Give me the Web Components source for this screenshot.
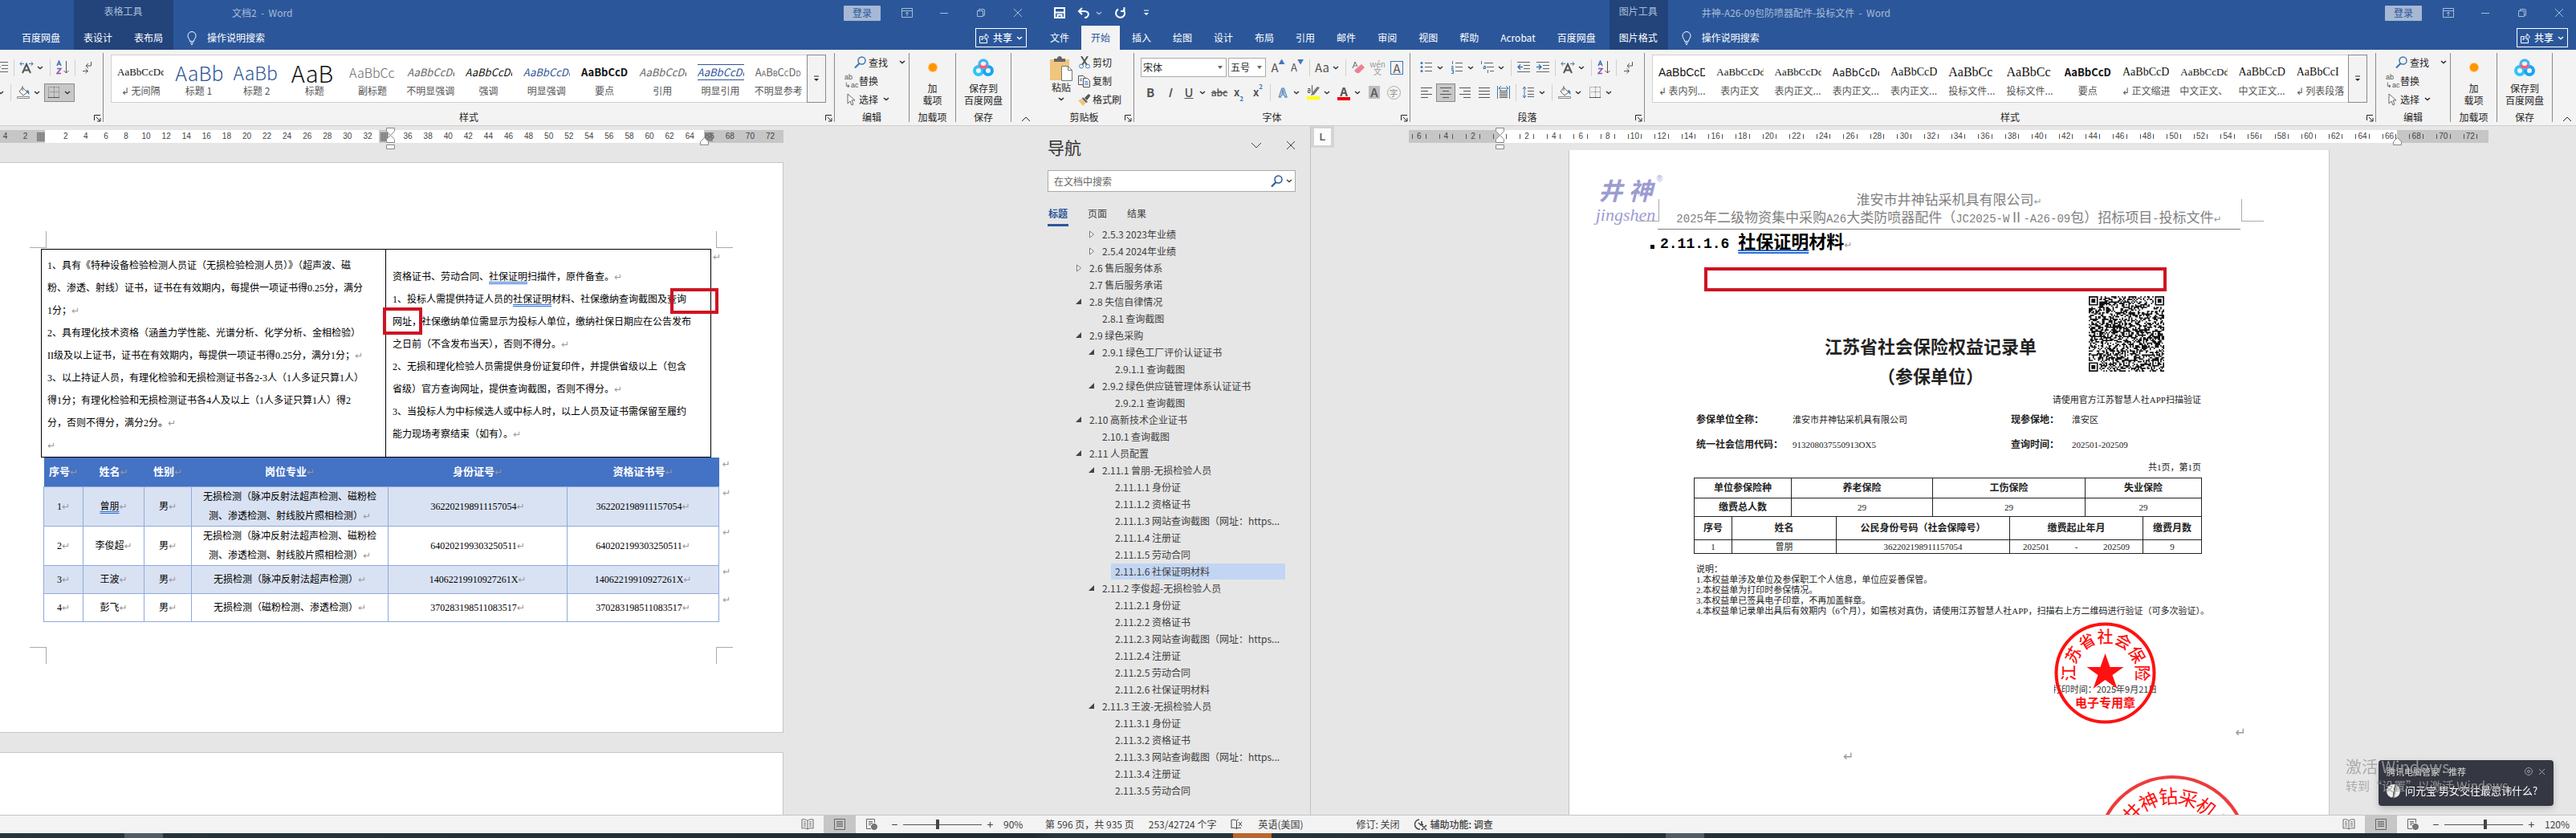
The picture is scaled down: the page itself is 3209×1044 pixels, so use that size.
<!DOCTYPE html>
<html lang="zh-CN">
<head>
<meta charset="utf-8">
<title>Word</title>
<style>
    html, body {
        margin: 0;
        height: 100%;
        overflow: hidden;
    }

    body {
        display: grid;
        grid-template-rows: minmax(0, 1fr) 6px;
        background: #e6e6e6;
        color: #262626;
        font: 12px/16px "Noto Sans CJK SC", sans-serif;
    }

    .screens {
        display: grid;
        grid-template-columns: 1289fr 1920fr;
        grid-template-rows: minmax(0, 1fr);
        min-height: 0;
    }

    word-window {
        min-width: 0;
        min-height: 0;
    }
</style>
</head>
<body>
<div class="screens">
    <word-window>
        <word-header slot="header" kind="table" style="--title-indent: 73px"></word-header>
        <word-ribbon slot="ribbon" kind="table"></word-ribbon>
        <table-document></table-document>
        <status-bar slot="status" zoom="90" thumb="44"></status-bar>
    </word-window>
    <word-window>
        <word-header slot="header" kind="picture" style="--title-indent: 42px"></word-header>
        <word-ribbon slot="ribbon" kind="picture"></word-ribbon>
        <nav-pane></nav-pane>
        <scan-document></scan-document>
        <status-bar slot="status" zoom="120" thumb="52" details></status-bar>
    </word-window>
</div>
<task-bar></task-bar>
<corner-notice></corner-notice>

<script>
const svg = (w, h, body, box) => `<svg width="${w}" height="${h}" viewBox="${box || `0 0 ${w} ${h}`}" fill="none" stroke="currentColor" aria-hidden="true">${body}</svg>`;
const lines = (list) => list.map(([x1, x2, y]) => `<path d="M${x1} ${y}.5H${x2}"/>`).join('');

const ICONS = {
    chev: svg(8, 5, '<path d="M1 1l3 2.5L7 1" stroke-width="1.4"/>'),
    save: svg(14, 14, '<path d="M1 1h12v12H1z" stroke-width="2"/><path d="M2 6.500h10M4.500 13V9.500h5V13" stroke-width="2"/>'),
    undo: svg(16, 14, '<path d="M6 1L2 5l4 4M2 5h7c7 0 6 8 0 8" stroke-width="2"/>'),
    redo: svg(15, 15, '<path d="M5 2.500A5.500 5.500 0 1 0 11 3M12.500 0v5H8" stroke-width="2"/>'),
    more: svg(8, 8, '<path d="M1 1h6" /><path d="M1 4h6L4 7z" fill="currentColor" stroke="none"/>'),
    bulb: svg(12, 17, '<path d="M3.500 12.500C3.500 9.500 1 9 1 5.500a5 5 0 0 1 10 0c0 3.500-2.500 4-2.500 7zM4 14.500h4M5 16.500h2"/>'),
    display: svg(14, 12, '<path d="M.5.500h13v11H.5zM.5 3.500h13M7 10V5M5 7l2-2 2 2"/>'),
    min: svg(14, 12, '<path d="M2 6.500h10"/>'),
    restore: svg(14, 12, '<path d="M2.500 3.500h7v7h-7zM4.500 3V1.500h5.500q1.500 0 1.500 1.500v6H10"/>'),
    close: svg(14, 12, '<path d="M2 1l10 10M12 1L2 11"/>'),
    share: svg(12, 14, '<path d="M4 5.500H.5v8h9V9M3 10c0-4 2-5 5-5V2l3.500 4L8 9.500V7C6 7 4 8 3 10z"/>'),
    launch: svg(9, 9, '<path d="M.5 7V.500H8M3 3l5 5M8 4v4H4" />'),
    up: svg(12, 7, '<path d="M1 6l5-5 5 5"/>'),
    paste: svg(28, 31, '<path d="M0 4h24v26H0z" fill="#efc67b" stroke="none"/><path d="M5 7V3h4c0-4 6-4 6 0h4v4z" fill="#666" stroke="none"/><path d="M14.500 12.500h8l5 5v13h-13z" fill="#fff" stroke="#777"/><path d="M22.500 12.500v5h5" stroke="#777"/>'),
    cut: svg(16, 16, '<path d="M4 0l7 11M12 0L5 11" stroke="#555" stroke-width="2"/><circle cx="4" cy="12.500" r="2.500" stroke="#4a82bd"/><circle cx="12" cy="12.500" r="2.500" stroke="#4a82bd"/>'),
    copy: svg(16, 16, '<path d="M.5 1.500h6l3 3v8h-9z" stroke="#555"/><path d="M6.500 4.500h5l3 3v8h-8z" fill="#fff" stroke="#555"/><path d="M8 8.500h4M8 10.500h5M8 12.500h5M2 5.500h3M2 7.500h3" stroke="#4a82bd"/>'),
    brush: svg(16, 16, '<path d="M8 6l5-5 2.500 2L11 9z" fill="#555" stroke="none"/><path d="M6 5l6 6-2 1-5-5z" fill="#555" stroke="none"/><path d="M0 9l5-2 5 5-4 4z" fill="#efc67b" stroke="none"/>'),
    eraser: svg(16, 16, '<path d="M6 9l6-5 4 4-7 7H6l-3-3z" fill="#ee8096" stroke="none"/><path d="M1 9l3-8 3 6M2.500 6h3" stroke="#666"/>'),
    hilite: svg(16, 18, '<path d="M6 10l7-8 3 1-7 9-4 1z" fill="#777" stroke="none"/><path d="M1 4.500h3v5H1.500v-3H4M6.500 0v9" stroke="#555"/><path d="M0 14h16v4H0z" fill="#ff0" stroke="none"/>'),
    bullets: svg(16, 16, `<g stroke="#666">${lines([[6, 15, 2], [6, 15, 7], [6, 15, 12]])}</g><g fill="#3f76b5" stroke="none"><circle cx="2" cy="2.500" r="1.500"/><circle cx="2" cy="7.500" r="1.500"/><circle cx="2" cy="12.500" r="1.500"/></g>`),
    numbers: svg(16, 16, `<g stroke="#666">${lines([[6, 15, 2], [6, 15, 7], [6, 15, 12]])}</g><path d="M2.500 0v4M1 6.500h2v2H1.500v1.500H4M1 11.500h2.500v4H1M2 13.500h1" stroke="#3f76b5"/>`),
    levels: svg(18, 16, `<g stroke="#666">${lines([[5, 16, 2], [8, 17, 7], [12, 17, 12]])}</g><path d="M1.500 0v4M4 6.500h2.500v3H4v-1.500h2M9.500 11v4" stroke="#3f76b5"/>`),
    outdent: svg(16, 14, `<g stroke="#666">${lines([[0, 16, 0], [8, 16, 4], [8, 16, 8], [0, 16, 12]])}</g><path d="M7 6.500H1M4 3.500l-3 3 3 3" stroke="#3f76b5" stroke-width="1.500"/>`),
    indent: svg(16, 14, `<g stroke="#666">${lines([[0, 16, 0], [8, 16, 4], [8, 16, 8], [0, 16, 12]])}</g><path d="M0 6.500h6M3 3.500l3 3-3 3" stroke="#3f76b5" stroke-width="1.500"/>`),
    scale: svg(18, 16, '<path d="M4 15L9 4l5 11M6 11.500h6" stroke="#555" stroke-width="2"/><path d="M6 3.500H1M3 1L1 3.500 3 6M12 3.500h5M15 1l2 2.500L15 6" stroke="#3f76b5"/>'),
    sort: svg(16, 18, '<path d="M1 7l2.500-6L6 7M2 5h3" stroke="#3f76b5" stroke-width="1.500"/><path d="M1 10.500h5l-5 6h5" stroke="#9350b4" stroke-width="1.500"/><path d="M12.500 1v15M9.500 13l3 3 3-3" stroke="#555"/>'),
    marks: svg(14, 16, '<path d="M11.500 1v5H5M8 3L5 6l3 3M1 12.500h6M4.500 9.500l3 3-3 3" stroke="#555"/>'),
    left: svg(16, 14, `<g stroke="#555">${lines([[1, 15, 1], [1, 10, 5], [1, 15, 9], [1, 10, 13]])}</g>`),
    center: svg(16, 14, `<g stroke="#555">${lines([[1, 15, 1], [4, 12, 5], [1, 15, 9], [4, 12, 13]])}</g>`),
    right: svg(16, 14, `<g stroke="#555">${lines([[1, 15, 1], [6, 15, 5], [1, 15, 9], [6, 15, 13]])}</g>`),
    justify: svg(16, 14, `<g stroke="#555">${lines([[1, 15, 1], [1, 15, 5], [1, 15, 9], [1, 15, 13]])}</g>`),
    spread: svg(16, 16, `<g stroke="#555">${lines([[3, 13, 6], [3, 13, 8], [3, 13, 10], [3, 13, 12], [3, 13, 14]])}</g><path d="M.5 0v16M15.500 0v16M2 3h12M5 0L2 3l3 3M11 0l3 3-3 3" stroke="#3f76b5"/>`),
    spacing: svg(16, 16, `<g stroke="#666">${lines([[7, 15, 2], [7, 15, 6], [7, 15, 10], [7, 15, 13]])}</g><path d="M3 1v14M1 4l2-3 2 3M1 12l2 3 2-3" stroke="#3f76b5"/>`),
    bucket: svg(16, 16, '<path d="M7 2l6 6-5 4-5-5zM7 6V0" stroke="#666"/><path d="M12 5c3 0 4 3 3 6l-2-3z" fill="#3f76b5" stroke="none"/><path d="M.5 13.500h15v2H.5z" stroke="#888" fill="#fff"/>'),
    border: svg(15, 15, '<path d="M.5 0v13M7.500 0v13M13.500 0v13M0 .500h14M0 6.500h14" stroke="#777" stroke-dasharray="1 1"/><path d="M0 13.500h14" stroke="#555"/>'),
    find: svg(16, 16, '<circle cx="9.500" cy="5.500" r="4.500" stroke-width="1.500"/><path d="M6.500 9L1 14.500" stroke-width="2.200"/>'),
    pointer: svg(16, 16, '<path d="M4 1v12l3-3 2 5 2-1-2-5h4z" fill="#fff" stroke="#666"/>'),
    addin: svg(24, 24, '<circle cx="12" cy="12" r="6" fill="#ffc56b" stroke="none"/><circle cx="12" cy="12" r="5" fill="#ff9500" stroke="none"/>'),
    netdisk: svg(26, 22, '<circle cx="7" cy="15" r="5" stroke="#2ec4f7" stroke-width="4"/><circle cx="19" cy="15" r="5" stroke="#18a5f5" stroke-width="4"/><circle cx="13" cy="7" r="5" stroke="#41b8f5" stroke-width="3.500"/><path d="M8.500 8a5 5 0 0 0 9 0" stroke="#fb5a7c" stroke-width="3.500"/>'),
    book: svg(16, 14, '<path d="M8 2.500C6 .500 3 .500 1 1v11c2-.5 5-.5 7 1 2-1.500 5-1.500 7-1V1c-2-.5-5-.5-7 1.500V13M3 4h3M3 6.500h3M3 9h3M10 4h3M10 6.500h3M10 9h3"/>'),
    print: svg(16, 14, '<path d="M1.500.500h13v13h-13zM4 3.500h8M4 5.500h8M4 7.500h8M4 9.500h8"/>'),
    web: svg(16, 14, '<path d="M7 12.500H1.500v-12h10V5M4 3.500h5M4 5.500h5M4 7.500h3"/><circle cx="11" cy="10" r="3.500" fill="#777"/>'),
    proof: svg(16, 14, '<path d="M7.500 2.500C6 1 3 1 1 1.500v10c2-.5 5-.5 6.500 1C9 11 11 11 13 11.500M7.500 2.500v10M7.500 2.500C8 1.500 9 1 10 1M10 4l4 5M14 4l-4 5"/>'),
    access: svg(17, 15, '<path d="M6 1a6 6 0 1 0 1 12M5 5l3 3 3-1M9 3v4M9 8l6 6M15 8l-6 6" stroke-width="1.500"/>'),
    gear: svg(12, 12, '<circle cx="6" cy="6" r="4.500"/><circle cx="6" cy="6" r="1.500"/>')
};

const MARK = '<i class="mark">↵</i>';

class BaseElement extends HTMLElement {
    connectedCallback() {
        this.attachShadow({ mode: 'open' });
        this.shadowRoot.innerHTML = `
            <style>
                *, *::before, *::after { box-sizing: border-box; }
                :host { display: block; box-sizing: border-box; }
                button, input, select {
                    margin: 0;
                    padding: 0;
                    border: 0;
                    border-radius: 0;
                    background: none;
                    color: inherit;
                    font: inherit;
                }
                p, h1, h2, h3 { margin: 0; font-size: inherit; font-weight: inherit; }
                svg { display: block; flex: none; }
                .mark {
                    color: #999;
                    font: normal 12px/12px "DejaVu Sans", sans-serif;
                }
            </style>
            ${this.render()}
        `;
    }
}

/* Frame: blue header, ribbon, work area, status bar */
class WordWindow extends BaseElement {
    render() {
        return `
            <style>
                :host {
                    display: grid;
                    grid-template-columns: minmax(0, 1fr);
                    grid-template-rows: 62px 95px minmax(0, 1fr) 23px;
                }
                .work {
                    display: flex;
                    min-width: 0;
                    min-height: 0;
                    overflow: hidden;
                }
            </style>
            <slot name="header"></slot>
            <slot name="ribbon"></slot>
            <div class="work"><slot></slot></div>
            <slot name="status"></slot>
        `;
    }
}
customElements.define('word-window', WordWindow);

class WordHeader extends BaseElement {
    render() {
        const table = this.getAttribute('kind') === 'table';
        const tabs = table ? ['百度网盘'] : ['文件', '开始', '插入', '绘图', '设计', '布局', '引用', '邮件', '审阅', '视图', '帮助', 'Acrobat', '百度网盘'];
        const contextTabs = table ? ['表设计', '表布局'] : ['图片格式'];
        const tab = (name) => `<button class="tab ${name === '开始' ? 'active' : ''}">${name}</button>`;
        return `
            <style>
                :host {
                    display: flex;
                    background: #2b579a;
                    color: #fff;
                    min-width: 0;
                }
                .part {
                    display: grid;
                    grid-template-rows: 32px 30px;
                    flex: none;
                }
                .main { padding: 0 5px 0 ${table ? 15 : 7}px; }
                .quick, .tabs, .top, .bottom { display: flex; align-items: center; }
                .quick { padding: 0 17px; gap: 15px; }
                .quick button:nth-child(3) { margin: 0 0 0 -8px; color: #a9bcd8; }
                .quick button:last-child { margin-left: 6px; }
                .tabs { gap: 3px; }
                .tab { height: 30px; padding: 0 12px; }
                .active { background: #f3f3f3; color: #2b579a; }
                .context { background: #22447b; padding-right: 1px; }
                .tool { color: #a9bcd8; text-align: center; line-height: 28px; }
                .rest { flex: 1; min-width: 0; }
                .top { padding: 0 14px 0 var(--title-indent); color: #a9bcd8; gap: 32px; white-space: pre; }
                .top h1 { flex: 1; }
                .login {
                    width: 46px;
                    height: 19px;
                    margin-right: -6px;
                    border-radius: 1px;
                    background: #a6b8d4;
                    color: #2b579a;
                }
                .bottom { padding: 0 10px 0 17px; }
                .tell { display: flex; flex: 1; align-items: center; gap: 13px; }
                .share {
                    display: flex;
                    align-items: center;
                    justify-content: space-between;
                    width: 64px;
                    height: 24px;
                    padding: 0 4px;
                    border: 1px solid #fff;
                    font-weight: 500;
                }
            </style>
            <div class="part main">
                <div class="quick">${table ? '' : ['save', 'undo', 'chev', 'redo', 'more'].map((n) => `<button aria-label="${n}">${ICONS[n]}</button>`).join('')}</div>
                <nav class="tabs">${tabs.map(tab).join('')}</nav>
            </div>
            <div class="part context">
                <div class="tool">${table ? '表格工具' : '图片工具'}</div>
                <nav class="tabs">${contextTabs.map(tab).join('')}</nav>
            </div>
            <div class="part rest">
                <div class="top">
                    <h1>${table ? '文档2' : '井神-A26-09包防喷器配件-投标文件'}  -  Word</h1>
                    <button class="login">登录</button>
                    ${['display', 'min', 'restore', 'close'].map((n) => `<button aria-label="${n}">${ICONS[n]}</button>`).join('')}
                </div>
                <div class="bottom">
                    <button class="tell">${ICONS.bulb}<span>操作说明搜索</span></button>
                    <button class="share">${ICONS.share}<span>共享</span>${ICONS.chev}</button>
                </div>
            </div>
        `;
    }
}
customElements.define('word-header', WordHeader);

class RibbonGroup extends BaseElement {
    render() {
        return `
            <style>
                :host {
                    display: grid;
                    grid-template-columns: minmax(0, 1fr);
                    grid-template-rows: minmax(0, 1fr) 12px;
                    flex: none;
                    min-width: 0;
                    height: 86px;
                    margin-top: 4px;
                    border-right: 1px solid #8a8a8a;
                }
                .body { min-width: 0; min-height: 0; }
                .foot { display: grid; align-items: center; line-height: 12px; text-align: center; }
                .foot > * { grid-area: 1 / 1; }
                button { justify-self: end; align-self: end; margin-right: 2px; }
            </style>
            <div class="body"><slot></slot></div>
            <div class="foot">
                <span>${this.getAttribute('label') || ''}</span>
                ${this.hasAttribute('launcher') ? `<button aria-label="更多选项">${ICONS.launch}</button>` : ''}
            </div>
        `;
    }
}
customElements.define('ribbon-group', RibbonGroup);

const TABLE_STYLES = [
    ['AaBbCcDdI', 'serif', '↲ 无间隔'],
    ['AaBb', 'light blue big', '标题 1'],
    ['AaBb', 'light blue large', '标题 2'],
    ['AaB', 'light huge', '标题'],
    ['AaBbCc', 'light gray wide', '副标题'],
    ['AaBbCcDd', 'gray italic', '不明显强调'],
    ['AaBbCcDd', 'italic', '强调'],
    ['AaBbCcDd', 'italic blue', '明显强调'],
    ['AaBbCcD', 'bold', '要点'],
    ['AaBbCcDd', 'gray italic', '引用'],
    ['AaBbCcDd', 'italic blue ruled', '明显引用'],
    ['AaBbCcDd', 'gray caps', '不明显参考']
];
const PICTURE_STYLES = [
    ['AaBbCcD', 'arial', '↲ 表内列...'],
    ['AaBbCcDdI', 'serif', '表内正文'],
    ['AaBbCcDdI', 'serif', '表内正文...'],
    ['AaBbCcDd', '', '表内正文...'],
    ['AaBbCcDd', 'serif mid', '表内正文...'],
    ['AaBbCc', 'serif wide', '投标文件...'],
    ['AaBbCc', 'serif wide', '投标文件...'],
    ['AaBbCcD', 'bold', '要点'],
    ['AaBbCcDd', 'serif mid', '↲ 正文缩进'],
    ['AaBbCcDdI', 'serif', '中文正文、'],
    ['AaBbCcDd', 'serif mid', '中文正文...'],
    ['AaBbCcI', 'serif mid', '↲ 列表段落']
];

class WordRibbon extends BaseElement {
    tool(name, content, cls = '') {
        return `<button class="t ${cls}" aria-label="${name}">${content || ICONS[name]}</button>`;
    }

    split(name, content, cls = '') {
        return `<button class="t split ${cls}" aria-label="${name}"><span class="face">${content || ICONS[name]}</span>${ICONS.chev}</button>`;
    }

    render() {
        const table = this.getAttribute('kind') === 'table';
        const styles = table ? TABLE_STYLES : PICTURE_STYLES;
        const t = this.tool.bind(this);
        const s = this.split.bind(this);
        const sep = '<span class="sep"></span>';
        return `
            <style>
                :host {
                    display: flex;
                    justify-content: flex-end;
                    min-width: 0;
                    overflow: hidden;
                    border-bottom: 1px solid #d2d0ce;
                    background: #f3f3f3;
                }
                .clip { width: 124px; }
                .font { width: 344px; }
                .para { width: 292px; }
                .styles { flex: 1 0 911px; }
                .edit { width: 93px; }
                .addin { width: 58px; }
                .disk { width: 69px; }
                .end { display: flex; flex: none; align-items: flex-end; width: 29px; padding: 0 0 4px 12px; }
                .cols { display: flex; padding-left: 12px; }
                .paste {
                    display: flex;
                    flex: none;
                    flex-direction: column;
                    align-items: center;
                    width: 42px;
                    padding-top: 4px;
                }
                .paste svg:last-child { margin-top: 4px; }
                .list button { display: flex; align-items: center; gap: 2px; height: 23px; white-space: nowrap; }
                .list svg:last-child { margin-left: 4px; }
                .list .far svg:last-child { margin-left: 12px; }
                .find { color: #3f76b5; }
                .row { display: flex; align-items: center; height: 24px; margin-left: 8px; }
                .row:first-child { margin-top: 6px; }
                .row + .row { margin-top: 7px; }
                .t {
                    display: flex;
                    flex: none;
                    align-items: center;
                    justify-content: center;
                    width: 24px;
                    height: 23px;
                    color: #555;
                    font: 15px/20px "Noto Sans CJK SC", sans-serif;
                }
                .split { width: 38px; justify-content: flex-start; color: #333; }
                .face { display: flex; align-items: center; justify-content: center; width: 24px; color: #555; }
                .face + svg { margin-left: 1px; }
                .on { background: #c8c8c8; outline: 1px solid #8a8a8a; outline-offset: -1px; }
                .sep { flex: none; width: 1px; height: 21px; margin: 0 3px; background: #d2d0ce; }
                .b { font-weight: 700; }
                .i { font-style: italic; font-weight: 500; }
                .u { font-weight: 500; text-decoration: underline; }
                .s { font-size: 12px; font-weight: 500; text-decoration: line-through; }
                .sm { font-size: 13px; }
                sup, sub { font-size: 8px; line-height: 8px; color: #3f76b5; }
                sup { align-self: flex-start; }
                sub { align-self: flex-end; }
                .glow { color: #fff; -webkit-text-stroke: 1px #3f76b5; font-weight: 700; }
                .under { border-bottom: 4px solid #e00; font-weight: 700; line-height: 15px; width: 16px; text-align: center; }
                .shade { background: #bdbdbd; width: 14px; line-height: 16px; font-weight: 500; }
                .frame { border: 1px solid #3f76b5; width: 16px; line-height: 15px; }
                .ring { border: 1px solid #aaa; border-radius: 50%; width: 17px; font-size: 10px; line-height: 15px; color: #888; }
                .pinyin { color: #999; font-size: 10px; line-height: 9px; }
                .pick { position: relative; height: 24px; }
                .pick select {
                    appearance: none;
                    height: 24px;
                    padding: 0 2px;
                    border: 1px solid #ababab;
                    background: #fff;
                    display: block;
                }
                .pick::after {
                    content: "";
                    position: absolute;
                    top: 10px;
                    right: 5px;
                    border: 3px solid transparent;
                    border-top: 4px solid #666;
                }
                .family { width: 107px; }
                .size { width: 47px; }
                .pick + .pick { margin: 0 3px 0 2px; }
                .gallery {
                    display: flex;
                    height: 60px;
                    margin: 2px 10px 0 9px;
                    border: 1px solid #d2d0ce;
                    background: #fff;
                }
                .style { flex: 1 1 0; min-width: 0; padding: 6px 7px 0; text-align: left; align-self: flex-start; }
                .sample {
                    display: block;
                    height: 29px;
                    overflow: hidden;
                    color: #111;
                    font: 13px/30px "Noto Sans CJK SC", sans-serif;
                    white-space: nowrap;
                }
                .name { display: block; margin: 0 -6px; color: #555; text-align: center; line-height: 18px; white-space: nowrap; }
                .more { display: flex; flex: none; align-items: center; justify-content: center; width: 24px; margin: -1px; border: 1px solid #8a8a8a; background: #f3f3f3; }
                .light { font-weight: 300; }
                .gray { color: #666; }
                .blue { color: #2f5597; }
                .italic { font-style: italic; }
                .bold { font-weight: 700; }
                .big { font-size: 25px; }
                .large { font-size: 23px; }
                .huge { font-size: 29px; }
                .caps { font-variant: small-caps; }
                .ruled { height: 20px; margin: 5px 0 4px; line-height: 18px; border: solid #2f5597; border-width: 1px 0; }
                .arial { font-family: "Liberation Sans", sans-serif; font-size: 14px; }
                .serif { font-family: "Liberation Serif", serif; }
                .mid { font-size: 14px; }
                .wide { font-size: 16px; }
                .stack { display: flex; flex-direction: column; align-items: center; width: 100%; line-height: 15px; }
                .pic { display: flex; align-items: center; height: 36px; }
                .rep { width: 16px; font: 9px/10px "Liberation Sans", sans-serif; color: #555; text-align: left; }
            </style>
            ${table ? '' : `
            <ribbon-group class="clip" label="剪贴板" launcher>
                <div class="cols">
                    <button class="paste">${ICONS.paste}<span>粘贴</span>${ICONS.chev}</button>
                    <div class="list">
                        <button>${ICONS.cut}<span>剪切</span></button>
                        <button>${ICONS.copy}<span>复制</span></button>
                        <button>${ICONS.brush}<span>格式刷</span></button>
                    </div>
                </div>
            </ribbon-group>
            <ribbon-group class="font" label="字体" launcher>
                <div class="row">
                    <label class="pick"><select class="family" aria-label="字体"><option>宋体</option></select></label>
                    <label class="pick"><select class="size" aria-label="字号"><option>五号</option></select></label>
                    ${t('增大字号', 'A<sup>▲</sup>')}${t('减小字号', 'A<sup>▼</sup>', 'sm')}${sep}${s('更改大小写', 'Aa')}${sep}
                    ${t('eraser')}${t('拼音指南', '<span class="pinyin">wén<br>文</span>')}${t('字符边框', '<span class="frame">A</span>')}
                </div>
                <div class="row">
                    ${t('加粗', 'B', 'b')}${t('倾斜', 'I', 'i')}${s('下划线', '<span class="u">U</span>')}
                    ${t('删除线', 'abc', 's')}${t('下标', 'x<sub>2</sub>', 'b sm')}${t('上标', 'x<sup>2</sup>', 'b sm')}${sep}
                    ${s('文本效果', '<span class="glow">A</span>')}${s('hilite')}${s('字体颜色', '<span class="under">A</span>')}
                    ${t('字符底纹', '<span class="shade">A</span>')}${t('带圈字符', '<span class="ring">字</span>')}
                </div>
            </ribbon-group>`}
            <ribbon-group class="para" label="${table ? '' : '段落'}" launcher>
                <div class="row">
                    ${s('bullets')}${s('numbers')}${s('levels')}${sep}${t('outdent')}${t('indent')}${sep}${s('scale')}${sep}${t('sort')}${sep}${t('marks')}
                </div>
                <div class="row">
                    ${t('left')}${t('center', '', 'on')}${t('right')}${t('justify')}${t('spread')}${sep}${s('spacing')}${sep}${s('bucket')}${s('border', '', table ? 'on' : '')}
                </div>
            </ribbon-group>
            <ribbon-group class="styles" label="样式" launcher>
                <div class="gallery">
                    ${styles.map(([sample, cls, name]) => `<button class="style"><span class="sample ${cls}">${sample}</span><span class="name">${name}</span></button>`).join('')}
                    <button class="more" aria-label="其他样式">${ICONS.more}</button>
                </div>
            </ribbon-group>
            <ribbon-group class="edit" label="编辑">
                <div class="cols">
                    <div class="list">
                        <button class="far"><span class="find">${ICONS.find}</span><span>查找</span>${ICONS.chev}</button>
                        <button><span class="rep">ab<br>↳ac</span><span>替换</span></button>
                        <button>${ICONS.pointer}<span>选择</span>${ICONS.chev}</button>
                    </div>
                </div>
            </ribbon-group>
            <ribbon-group class="addin" label="加载项">
                <button class="stack"><span class="pic">${ICONS.addin}</span><span>加<br>载项</span></button>
            </ribbon-group>
            <ribbon-group class="disk" label="保存">
                <button class="stack"><span class="pic">${ICONS.netdisk}</span><span>保存到<br>百度网盘</span></button>
            </ribbon-group>
            <div class="end"><button aria-label="折叠功能区">${ICONS.up}</button></div>
        `;
    }
}
customElements.define('word-ribbon', WordRibbon);

class DocRuler extends BaseElement {
    render() {
        const from = Number(this.getAttribute('from'));
        const ticks = this.hasAttribute('ticks');
        let cells = '';
        for (let n = from; n <= 72; n += 2) {
            const hidden = n === 0 || (!ticks && n === 34);
            cells += `<span>${hidden ? '' : Math.abs(n)}</span>`;
        }
        const hatch = (x) => `<rect x="${x}" y="4" width="10" height="11" fill="url(#h)" stroke="none"/>`;
        const start = ticks ? 113 : 486;
        const stop = ticks ? 1231 : 877;
        return `
            <style>
                :host {
                    position: relative;
                    height: 16px;
                    margin-top: 5px;
                    background: linear-gradient(to right, #c6c6c6 ${ticks ? 113 : 56}px, #fff 0, #fff ${stop}px, #c6c6c6 0);
                }
                .cells { display: flex; margin: ${ticks ? '0 6px 0 -4px' : '0 4px 0 -6px'}; }
                .cells span {
                    display: flex;
                    flex: 1 1 0;
                    justify-content: center;
                    align-items: center;
                    min-width: 0;
                    height: 16px;
                    gap: 2px;
                    color: #444;
                    font: 10px/16px "Liberation Sans", sans-serif;
                }
                .ticks span { justify-content: space-between; padding: 0 8px; }
                .ticks span::before, .ticks span::after { content: ""; width: 1px; height: 6px; background: #555; }
                svg { position: absolute; left: 0; top: -4px; }
            </style>
            <div class="cells ${ticks ? 'ticks' : ''}">${cells}</div>
            ${svg(ticks ? 1345 : 976, 30, `
                <defs><pattern id="h" width="2" height="2" patternUnits="userSpaceOnUse"><path d="M0 .5h2M.5 0v2" stroke="#777"/></pattern></defs>
                ${ticks ? '' : `<path d="M472 4h10v16h-10z" fill="#c6c6c6" stroke="none"/><g transform="translate(0 3)">${hatch(46)}${hatch(474)}${hatch(878)}</g>`}
                <g stroke="#888" fill="#fff">
                    <path d="M${start - 5}.5 1.500h10v4l-5 5-5-5z"/>
                    <path d="M${start - 5}.5 19.500v-4l5-5 5 5v4zM${start - 5}.5 22.500h10v5h-10z"/>
                    <path d="M${stop - 5}.5 22.500v-4l5-5 5 5v4z"/>
                </g>
            `)}
        `;
    }
}
customElements.define('doc-ruler', DocRuler);

class TableDocument extends BaseElement {
    render() {
        const job = `无损检测（脉冲反射法超声检测、磁粉检<br>测、渗透检测、射线胶片照相检测）${MARK}`;
        const rows = [
            ['1', '<u>曾朋</u>', job, '362202198911157054'],
            ['2', '李俊超', job, '640202199303250511'],
            ['3', '王波', `无损检测（脉冲反射法超声检测）${MARK}`, '14062219910927261X'],
            ['4', '彭飞', `无损检测（磁粉检测、渗透检测）${MARK}`, '370283198511083517']
        ];
        return `
            <style>
                :host { flex: 1; min-width: 0; }
                doc-ruler { width: 976px; }
                .page {
                    position: relative;
                    height: 711px;
                    margin: 24px 313px 13px 0;
                    padding-top: 85px;
                    border: 1px solid #c6c6c6;
                    border-left: 0;
                    background: #fff;
                    color: #000;
                    font: 12px/28px "Liberation Serif", "Noto Sans CJK SC", serif;
                    white-space: nowrap;
                }
                .corners { display: flex; justify-content: space-between; width: 876px; margin-left: 37px; }
                .corners span { width: 21px; height: 21px; border: 0 solid #aaa; }
                .top span { border-bottom-width: 1px; }
                .bottom { margin-top: 31px; }
                .bottom span { border-top-width: 1px; }
                .corners span:first-child { border-right-width: 1px; }
                .corners span:last-child { border-left-width: 1px; }
                .line { display: flex; margin-left: 51px; padding-top: 1px; }
                table { border-collapse: collapse; table-layout: fixed; }
                .terms { width: 834px; height: 259px; }
                .terms td { padding: 6px 7px 0; border: 1px solid #000; vertical-align: top; }
                .terms td + td { vertical-align: middle; padding: 6px 8px 0; }
                .line > .mark { margin: 4px 0 0 2px; }
                u { text-decoration: underline double #2b6cd4; text-underline-offset: 2px; }
                .people { width: 856px; margin-left: 54px; line-height: 24px; text-align: center; }
                .people th { height: 36px; padding: 0; background: #4472c4; color: #fff; font-size: 13px; }
                .people td { border: 1px solid #8eaadb; padding: 0; height: 35px; }
                .people tr:nth-child(even) td:not(.out) { background: #d9e2f3; }
                .people tr > .out { border: 0; vertical-align: top; line-height: 16px; text-align: left; padding-left: 4px; }
                .box { position: absolute; border: 4px solid #cf1322; }
                .first { left: 835px; top: 156px; width: 60px; height: 32px; }
                .second { left: 477px; top: 180px; width: 49px; height: 34px; }
                .next { height: 200px; margin-bottom: 0; }
            </style>
            <doc-ruler from="-4"></doc-ruler>
            <article class="page">
                <div class="corners top"><span></span><span></span></div>
                <div class="line">
                    <table class="terms">
                        <colgroup><col width="429"><col width="405"></colgroup>
                        <tr>
                            <td>
                                <p>1、具有《特种设备检验检测人员证（无损检验检测人员）》（超声波、磁<br>粉、渗透、射线）证书，证书在有效期内，每提供一项证书得0.25分，满分<br>1分；${MARK}</p>
                                <p>2、具有理化技术资格（涵盖力学性能、光谱分析、化学分析、金相检验）<br>II级及以上证书，证书在有效期内，每提供一项证书得0.25分，满分1分；${MARK}</p>
                                <p>3、以上持证人员，有理化检验和无损检测证书各2-3人（1人多证只算1人）<br>得1分；有理化检验和无损检测证书各4人及以上（1人多证只算1人）得2<br>分，否则不得分，满分2分。${MARK}</p>
                                <p>${MARK}</p>
                            </td>
                            <td>
                                <p>资格证书、劳动合同、<u>社保证明</u>扫描件，原件备查。${MARK}</p>
                                <p>1、投标人需提供持证人员的<u>社保证明</u>材料、社保缴纳查询截图及查询<br>网址，社保缴纳单位需显示为投标人单位，缴纳社保日期应在公告发布<br>之日前（不含发布当天），否则不得分。${MARK}</p>
                                <p>2、无损和理化检验人员需提供身份证复印件，并提供省级以上（包含<br>省级）官方查询网址，提供查询截图，否则不得分。${MARK}</p>
                                <p>3、当投标人为中标候选人或中标人时，以上人员及证书需保留至履约<br>能力现场考察结束（如有）。${MARK}</p>
                            </td>
                        </tr>
                    </table>
                    ${MARK}
                </div>
                <table class="people">
                    <colgroup><col width="49"><col width="76"><col width="59"><col width="245"><col width="223"><col width="189"><col width="15"></colgroup>
                    <tr>${['序号', '姓名', '性别', '岗位专业', '身份证号', '资格证书号'].map((h) => `<th>${h}${MARK}</th>`).join('')}<td class="out">${MARK}</td></tr>
                    ${rows.map(([no, name, work, id]) => `<tr><td>${no}${MARK}</td><td>${name}${MARK}</td><td>男${MARK}</td><td>${work}</td><td>${id}${MARK}</td><td>${id}${MARK}</td><td class="out">${MARK}</td></tr>`).join('')}
                </table>
                <div class="corners bottom"><span></span><span></span></div>
                <span class="box first"></span>
                <span class="box second"></span>
            </article>
            <article class="page next">
                <div class="corners top"><span></span><span></span></div>
            </article>
        `;
    }
}
customElements.define('table-document', TableDocument);

const OUTLINE = [
    [3, '▷', '2.5.3 2023年业绩'], [3, '▷', '2.5.4 2024年业绩'], [2, '▷', '2.6 售后服务体系'], [2, '', '2.7 售后服务承诺'],
    [2, '◢', '2.8 失信自律情况'], [3, '', '2.8.1 查询截图'], [2, '◢', '2.9 绿色采购'], [3, '◢', '2.9.1 绿色工厂评价认证证书'],
    [4, '', '2.9.1.1 查询截图'], [3, '◢', '2.9.2 绿色供应链管理体系认证证书'], [4, '', '2.9.2.1 查询截图'],
    [2, '◢', '2.10 高新技术企业证书'], [3, '', '2.10.1 查询截图'], [2, '◢', '2.11 人员配置'],
    [3, '◢', '2.11.1 曾朋-无损检验人员'], [4, '', '2.11.1.1 身份证'], [4, '', '2.11.1.2 资格证书'],
    [4, '', '2.11.1.3 网站查询截图（网址：https...'], [4, '', '2.11.1.4 注册证'], [4, '', '2.11.1.5 劳动合同'],
    [4, '', '2.11.1.6 社保证明材料'], [3, '◢', '2.11.2 李俊超-无损检验人员'], [4, '', '2.11.2.1 身份证'],
    [4, '', '2.11.2.2 资格证书'], [4, '', '2.11.2.3 网站查询截图（网址：https...'], [4, '', '2.11.2.4 注册证'],
    [4, '', '2.11.2.5 劳动合同'], [4, '', '2.11.2.6 社保证明材料'], [3, '◢', '2.11.3 王波-无损检验人员'],
    [4, '', '2.11.3.1 身份证'], [4, '', '2.11.3.2 资格证书'], [4, '', '2.11.3.3 网站查询截图（网址：https...'],
    [4, '', '2.11.3.4 注册证'], [4, '', '2.11.3.5 劳动合同']
];

class NavPane extends BaseElement {
    render() {
        const arrow = { '▷': svg(8, 10, '<path d="M1.500 1v8l5-4z" fill="#fff" stroke="#777"/>'), '◢': svg(8, 10, '<path d="M0 8h7V1z" fill="#444" stroke="none"/>'), '': '' };
        return `
            <style>
                :host { flex: none; width: 344px; padding: 0 18px 0 16px; border-right: 1px solid #c0c0c0; color: #404040; }
                header { display: flex; align-items: center; gap: 30px; height: 55px; }
                header h2 { flex: 1; font-size: 21px; line-height: 32px; color: #333; }
                header button { margin-bottom: 8px; }
                header h2 { margin-bottom: 4px; }
                .search { display: flex; align-items: center; height: 27px; padding: 0 3px 0 7px; border: 1px solid #ababab; background: #fff; gap: 3px; }
                .search input { flex: 1; min-width: 0; outline: 0; }
                .search input::placeholder { color: #666; }
                .search button:nth-of-type(1) { color: #2b579a; }
                .tabs { display: flex; gap: 23px; height: 42px; padding-top: 16px; }
                .tabs button { height: 27px; padding: 0 1px 3px; border-bottom: 3px solid transparent; }
                .tabs .on { border-color: #2b579a; color: #2b579a; font-weight: 700; }
                ul { margin: 0 0 0 16px; padding: 0; list-style: none; }
                li { display: flex; align-items: center; height: 21px; }
                li a { flex: 1; margin-right: 13px; padding-left: 5px; color: inherit; text-decoration: none; line-height: 20px; white-space: nowrap; }
                li span { width: 12px; }
                .l2 { padding-left: 19px; }
                .l3 { padding-left: 35px; }
                .l4 { padding-left: 51px; }
                .current { background: #c2d5f2; }
            </style>
            <header><h2>导航</h2><button aria-label="任务窗格选项">${svg(14, 8, '<path d="M1 1l6 6 6-6"/>')}</button><button aria-label="关闭">${svg(12, 12, '<path d="M1 1l10 10M11 1L1 11"/>')}</button></header>
            <div class="search">
                <input type="text" placeholder="在文档中搜索" aria-label="在文档中搜索">
                <button aria-label="搜索">${ICONS.find}</button><button aria-label="搜索选项">${ICONS.chev}</button>
            </div>
            <div class="tabs"><button class="on">标题</button><button>页面</button><button>结果</button></div>
            <ul>
                ${OUTLINE.map(([level, state, text]) => `<li class="l${level}"><span>${arrow[state]}</span><a href="#" class="${text.startsWith('2.11.1.6') ? 'current' : ''}">${text}</a></li>`).join('')}
            </ul>
        `;
    }
}
customElements.define('nav-pane', NavPane);

class QrCode extends BaseElement {
    render() {
        const n = 57;
        const finder = (x, y, left, top, size) => {
            const dx = Math.abs(x - left - (size - 1) / 2);
            const dy = Math.abs(y - top - (size - 1) / 2);
            const d = Math.max(dx, dy);
            if (size === 7) return d > 4 ? null : d === 3 || d < 2;
            return d > 2 ? null : d !== 1;
        };
        let seed = 7;
        let d = '';
        for (let y = 0; y < n; y++) {
            for (let x = 0; x < n; x++) {
                seed = (seed * 1103515245 + 12345) % 2147483648;
                let dark = seed / 2147483648 > 0.5;
                for (const [l, t, s] of [[26, 4, 5], [4, 26, 5], [26, 26, 5], [48, 26, 5], [26, 48, 5], [48, 48, 5], [0, 0, 7], [50, 0, 7], [0, 50, 7]]) {
                    const f = finder(x, y, l, t, s);
                    if (f !== null) dark = f;
                }
                if (dark) d += `M${x} ${y}h1v1h-1z`;
            }
        }
        return svg(94, 94, `<path d="${d}" fill="#111" stroke="none"/>`, `0 0 ${n} ${n}`);
    }
}
customElements.define('qr-code', QrCode);

class ScanDocument extends BaseElement {
    // letters set round the inside of a seal
    ring(text, cx, cy, r, from, step, size) {
        return [...text].map((c, i) => `<text transform="rotate(${from + i * step} ${cx} ${cy})" x="${cx}" y="${cy - r}" font-size="${size}">${c}</text>`).join('');
    }

    render() {
        return `
            <style>
                :host { flex: 1; min-width: 0; }
                .rule { display: flex; height: 30px; }
                .tab-stop { flex: none; width: 29px; height: 27px; border: solid #d4d4d4; border-width: 3px 4px; background: #fcfcfc; color: #666; font: 700 12px/20px "Liberation Sans", sans-serif; }
                .center { display: flex; flex: 1; justify-content: center; padding-right: 16px; }
                doc-ruler { flex: 0 1 1345px; }
                .page {
                    position: relative;
                    width: 948px;
                    height: 1340px;
                    margin: 0 auto;
                    padding: 52px 110px 0;
                    border: solid #c6c6c6;
                    border-width: 0 1px;
                    background: #fff;
                    color: #222;
                    font: 11px/13px "Liberation Serif", "Noto Sans CJK SC", serif;
                    white-space: nowrap;
                }
                .wrap { padding-left: 14px; }
                .head { height: 47px; border-bottom: 1px solid #7f7f7f; color: #7f7f7f; text-align: center; font-size: 17px; line-height: 22px; }
                .head span { font-family: "Liberation Mono", monospace; font-size: 14px; }
                .logo { position: absolute; left: 28px; top: 34px; width: 84px; color: #9c9cd0; font: italic 700 30px/36px "Liberation Serif", "Noto Sans CJK SC", serif; text-align: center; }
                .logo small { display: block; font-size: 22px; font-weight: 400; line-height: 22px; }
                .logo sup { position: absolute; right: -4px; top: -6px; font: 10px/16px "Liberation Sans", sans-serif; }
                .corner { position: absolute; top: 61px; width: 28px; height: 28px; border: 0 solid #aaa; border-bottom-width: 1px; }
                .tl { left: 84px; border-right-width: 1px; }
                .tr { left: 837px; border-left-width: 1px; }
                .heading { position: relative; padding-left: 3px; color: #000; font-size: 22px; font-weight: 700; line-height: 32px; }
                .heading::before { content: ""; position: absolute; left: -9px; top: 19px; width: 5px; height: 5px; background: #000; }
                .heading u { text-decoration: underline double #2b6cd4; }
                .heading span { font-family: "Liberation Mono", monospace; font-size: 18px; white-space: pre; }
                .box { width: 576px; height: 30px; margin: 13px 0 0 58px; border: 4px solid #cf1322; }
                .scan { width: 632px; margin-left: 45px; }
                .cover { display: grid; height: 125px; }
                .cover > * { grid-area: 1 / 1; }
                .cover h3 { align-self: end; padding-right: 42px; font-size: 22px; font-weight: 700; line-height: 37px; text-align: center; }
                qr-code { justify-self: end; margin: 6px 46px 0 0; }
                .r { text-align: right; line-height: 20px; }
                .pages { line-height: 25px; }
                dl { display: grid; grid-template-columns: 120px 272px 76px 1fr; margin: 0; padding-left: 3px; line-height: 31px; }
                dt { font-size: 12px; font-weight: 700; }
                dd { margin: 0; }
                table { width: 632px; border-collapse: collapse; table-layout: fixed; text-align: center; }
                table + table { margin-top: -1px; }
                th, td { padding: 0; border: 1px solid #222; }
                th { font-size: 12px; }
                .kinds th { height: 25px; }
                .kinds tr + tr > * { height: 23px; }
                .people th { height: 29px; }
                .people td { height: 17px; }
                .spread { display: flex; justify-content: space-around; }
                .notes { margin: 13px 0 0 3px; }
                .seal { margin: 7px 0 0 449px; }
                .seal text, .second text { fill: #f11; stroke: none; font-family: "Noto Sans CJK SC", sans-serif; font-weight: 500; text-anchor: middle; }
                .second text { font-weight: 400; }
                .seal .date { fill: #333; font-size: 11px; font-weight: 400; }
                .end { padding: 5px 0 0; margin-right: -7px; text-align: right; }
                .mid { margin: 16px 0 0 231px; }
                .second { margin: 15px 0 0 546px; }
                .big { font-size: 16px; }
            </style>
            <div class="rule">
                <button class="tab-stop" aria-label="制表位">L</button>
                <div class="center"><doc-ruler from="-6" ticks></doc-ruler></div>
            </div>
            <div class="wrap">
            <article class="page">
                <div class="logo">井 神<sup>®</sup><small>jingshen</small></div>
                <span class="corner tl"></span><span class="corner tr"></span>
                <div class="head">
                    <p>淮安市井神钻采机具有限公司${MARK}</p>
                    <p><span>2025</span>年二级物资集中采购<span>A26</span>大类防喷器配件（<span>JC2025-W</span>Ⅱ<span>-A26-09</span>包）招标项目<span>-</span>投标文件${MARK}</p>
                </div>
                <h2 class="heading"><span>2.11.1.6 </span><u>社保证明</u>材料${MARK}</h2>
                <div class="box"></div>
                <div class="scan">
                    <div class="cover"><h3>江苏省社会保险权益记录单<br>（参保单位）</h3><qr-code></qr-code></div>
                    <p class="r">请使用官方江苏智慧人社APP扫描验证</p>
                    <dl>
                        <dt>参保单位全称：</dt><dd>淮安市井神钻采机具有限公司</dd><dt>现参保地：</dt><dd>淮安区</dd>
                        <dt>统一社会信用代码：</dt><dd>913208037550913OX5</dd><dt>查询时间：</dt><dd>202501-202509</dd>
                    </dl>
                    <p class="r pages">共1页，第1页</p>
                    <table class="kinds">
                        <colgroup><col width="121"><col width="176"><col width="190"><col width="145"></colgroup>
                        <tr><th>单位参保险种</th><th>养老保险</th><th>工伤保险</th><th>失业保险</th></tr>
                        <tr><th>缴费总人数</th><td>29</td><td>29</td><td>29</td></tr>
                    </table>
                    <table class="people">
                        <colgroup><col width="47"><col width="130"><col width="216"><col width="166"><col width="73"></colgroup>
                        <tr><th>序号</th><th>姓名</th><th>公民身份号码（社会保障号）</th><th>缴费起止年月</th><th>缴费月数</th></tr>
                        <tr><td>1</td><td>曾朋</td><td>362202198911157054</td><td><div class="spread"><span>202501</span><span>-</span><span>202509</span></div></td><td>9</td></tr>
                    </table>
                    <div class="notes">
                        <p>说明：</p>
                        <p>1.本权益单涉及单位及参保职工个人信息，单位应妥善保管。</p>
                        <p>2.本权益单为打印时参保情况。</p>
                        <p>3.本权益单已签具电子印章，不再加盖鲜章。</p>
                        <p>4.本权益单记录单出具后有效期内（6个月），如需核对真伪，请使用江苏智慧人社APP，扫描右上方二维码进行验证（可多次验证）。</p>
                    </div>
                    <div class="seal">${svg(127, 127, `
                        <text class="date" x="63" y="88">打印时间：2025年9月21日</text>
                        <circle cx="63.500" cy="63.500" r="61" stroke="#f11" stroke-width="4"/>
                        <path d="M63.500 39l6 17h17l-14 10 6 17-15-11-15 11 6-17-14-10h17z" fill="#f11" stroke="none"/>
                        ${this.ring('江苏省社会保险', 63.5, 63.5, 38, -90, 30, 20)}
                        <text x="63.500" y="106" font-size="15" style="font-weight: 700">电子专用章</text>`)}</div>
                </div>
                <p class="end"><i class="mark big">↵</i></p>
                <p class="mid"><i class="mark big">↵</i></p>
                <div class="second">${svg(190, 190, `
                    <circle cx="95" cy="95" r="93" stroke="#ee3b3b" stroke-width="4"/>
                    ${this.ring('井神钻采机具', 95, 95, 60, -46, 21, 24)}`)}</div>
            </article>
            </div>
        `;
    }
}
customElements.define('scan-document', ScanDocument);

class StatusBar extends BaseElement {
    render() {
        return `
            <style>
                :host { display: flex; align-items: center; padding-right: 6px; border-top: 1px solid #c6c6c6; background: #f3f3f3; color: #404040; }
                .info { display: flex; flex: 1; align-items: center; gap: 18px; padding-left: 13px; white-space: nowrap; }
                .info .track { margin-left: 48px; }
                .access { display: flex; align-items: center; gap: 3px; font-weight: 500; }
                .view { display: flex; align-items: center; justify-content: center; width: 40px; height: 22px; color: #666; }
                .on { background: #c6c6c6; }
                .step { width: 11px; text-align: center; font-size: 14px; }
                .minus { margin-left: 3px; }
                input { appearance: none; width: 98px; height: 16px; margin: 0 5px; background: linear-gradient(#555, #555) center / 100% 1px no-repeat; }
                input::-webkit-slider-thumb { appearance: none; width: 4px; height: 12px; background: #444; }
                output { width: 44px; padding-left: 11px; }
            </style>
            <div class="info">${this.hasAttribute('details') ? `
                <span>第 596 页，共 935 页</span><span>253/42724 个字</span>${ICONS.proof}<span>英语(美国)</span>
                <span class="track">修订: 关闭</span><span class="access">${ICONS.access}辅助功能: 调查</span>` : ''}
            </div>
            <button class="view" aria-label="阅读视图">${ICONS.book}</button>
            <button class="view on" aria-label="页面视图">${ICONS.print}</button>
            <button class="view" aria-label="Web 版式视图">${ICONS.web}</button>
            <button class="step minus" aria-label="缩小">−</button>
            <input type="range" min="0" max="100" value="${this.getAttribute('thumb')}" aria-label="缩放">
            <button class="step" aria-label="放大">+</button>
            <output>${this.getAttribute('zoom')}%</output>
        `;
    }
}
customElements.define('status-bar', StatusBar);

class TaskBar extends BaseElement {
    render() {
        return `
            <style>
                :host { display: flex; background: linear-gradient(to right, #25353f, #1c2b36 40%, #25353f 41%, #1c2b36); }
                span { width: 48px; height: 6px; background: #4f5d64; }
                span:nth-of-type(1) { margin-left: 155px; }
                span:nth-of-type(2) { margin-left: 1333px; background: #b9672b; }
                span:nth-of-type(3) { margin-left: 491px; }
            </style>
            <span></span><span></span><span></span>
        `;
    }
}
customElements.define('task-bar', TaskBar);

/* Floating message with the activation watermark over it */
class CornerNotice extends BaseElement {
    render() {
        return `
            <style>
                :host { position: fixed; right: 28px; bottom: 40px; width: 259px; height: 57px; white-space: nowrap; }
                .card { width: 218px; height: 57px; margin-left: 41px; padding: 5px 10px; border-radius: 4px; background: #353742; color: #ddd; box-shadow: 0 3px 8px #0003; }
                .bar, .ask { display: flex; align-items: center; gap: 6px; }
                .bar { height: 18px; font-size: 11px; }
                .bar span { flex: 1; }
                .bar button { color: #9aa4b0; }
                .ask { height: 30px; color: #fff; font-size: 13px; }
                .ask i { width: 17px; height: 17px; border-radius: 50%; background: linear-gradient(100deg, #eee 50%, #555 52%, #eee 70%); }
                .mark-text { position: absolute; left: 0; top: -5px; color: #a0a0a0; opacity: 0.85; font-size: 15px; line-height: 22px; }
                .mark-text b { display: block; font-size: 20px; font-weight: 400; line-height: 26px; }
            </style>
            <div class="card">
                <div class="bar"><span>腾讯电脑管家·推荐</span><button aria-label="设置">${ICONS.gear}</button><button aria-label="关闭">${svg(9, 9, '<path d="M1 1l7 7M8 1L1 8"/>')}</button></div>
                <div class="ask"><i></i><span>问元宝 男女交往最忌讳什么?</span></div>
            </div>
            <div class="mark-text"><b>激活 Windows</b>转到“设置”以激活 Windows。</div>
        `;
    }
}
customElements.define('corner-notice', CornerNotice);
</script>
</body>
</html>
